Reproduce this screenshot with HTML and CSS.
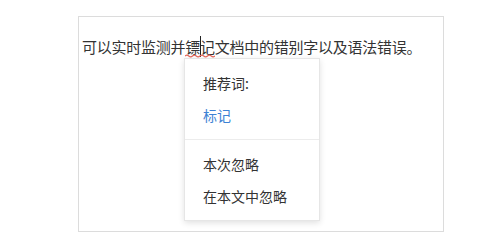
FILE: index.html
```html
<!DOCTYPE html>
<html lang="zh">
<head>
<meta charset="utf-8">
<link rel="stylesheet" href="styles.css">
</head>
<body>
<div class="editor">
  <p class="line">可以实时监测并<span class="typo">镖<span class="caret"></span>记<svg class="wave" width="30" height="4" viewBox="0 0 30 4"><path d="M0 2 Q1.9 0.2 3.75 2 T7.5 2 T11.25 2 T15 2 T18.75 2 T22.5 2 T26.25 2 T30 2" fill="none" stroke="#e5685c" stroke-width="1.1"/></svg></span>文档中的错别字以及语法错误。</p>
  <div class="menu">
    <div class="group">
      <div class="item label">推荐词:</div>
      <div class="item suggest">标记</div>
    </div>
    <div class="group">
      <div class="item">本次忽略</div>
      <div class="item">在本文中忽略</div>
    </div>
  </div>
</div>
</body>
</html>
```
FILE: styles.css
```css
html, body {
  margin: 0;
  padding: 0;
  background: #fff;
}
body {
  padding: 16px 0 0 78px;
  font-family: "Noto Sans CJK SC", "Noto Sans", sans-serif;
  color: #333;
}
.editor {
  position: relative;
  box-sizing: border-box;
  width: 366px;
  height: 216px;
  border: 1px solid #dcdcdc;
}
.line {
  margin: 0;
  padding: 19px 0 0 3px;
  font-size: 15px;
  line-height: 21px;
  white-space: nowrap;
  letter-spacing: -0.25px;
}
.typo {
  position: relative;
}
.wave {
  position: absolute;
  left: 0;
  top: calc(100% - 3px);
  display: block;
}
.caret {
  display: inline-block;
  width: 0;
  height: 21px;
  border-left: 1px solid #222;
  vertical-align: top;
  margin-right: -1px;
}
.menu {
  position: absolute;
  left: 105px;
  top: 41px;
  box-sizing: border-box;
  width: 136px;
  background: #fff;
  border: 1px solid #e6e6e6;
  box-shadow: 0 2px 6px rgba(0, 0, 0, 0.12);
  font-size: 14px;
}
.group {
  padding: 8px 0;
}
.group + .group {
  border-top: 1px solid #ececec;
}
.item {
  height: 32px;
  line-height: 32px;
  padding-left: 18px;
  color: #333;
}
.suggest {
  color: #3d82d4;
}
```
